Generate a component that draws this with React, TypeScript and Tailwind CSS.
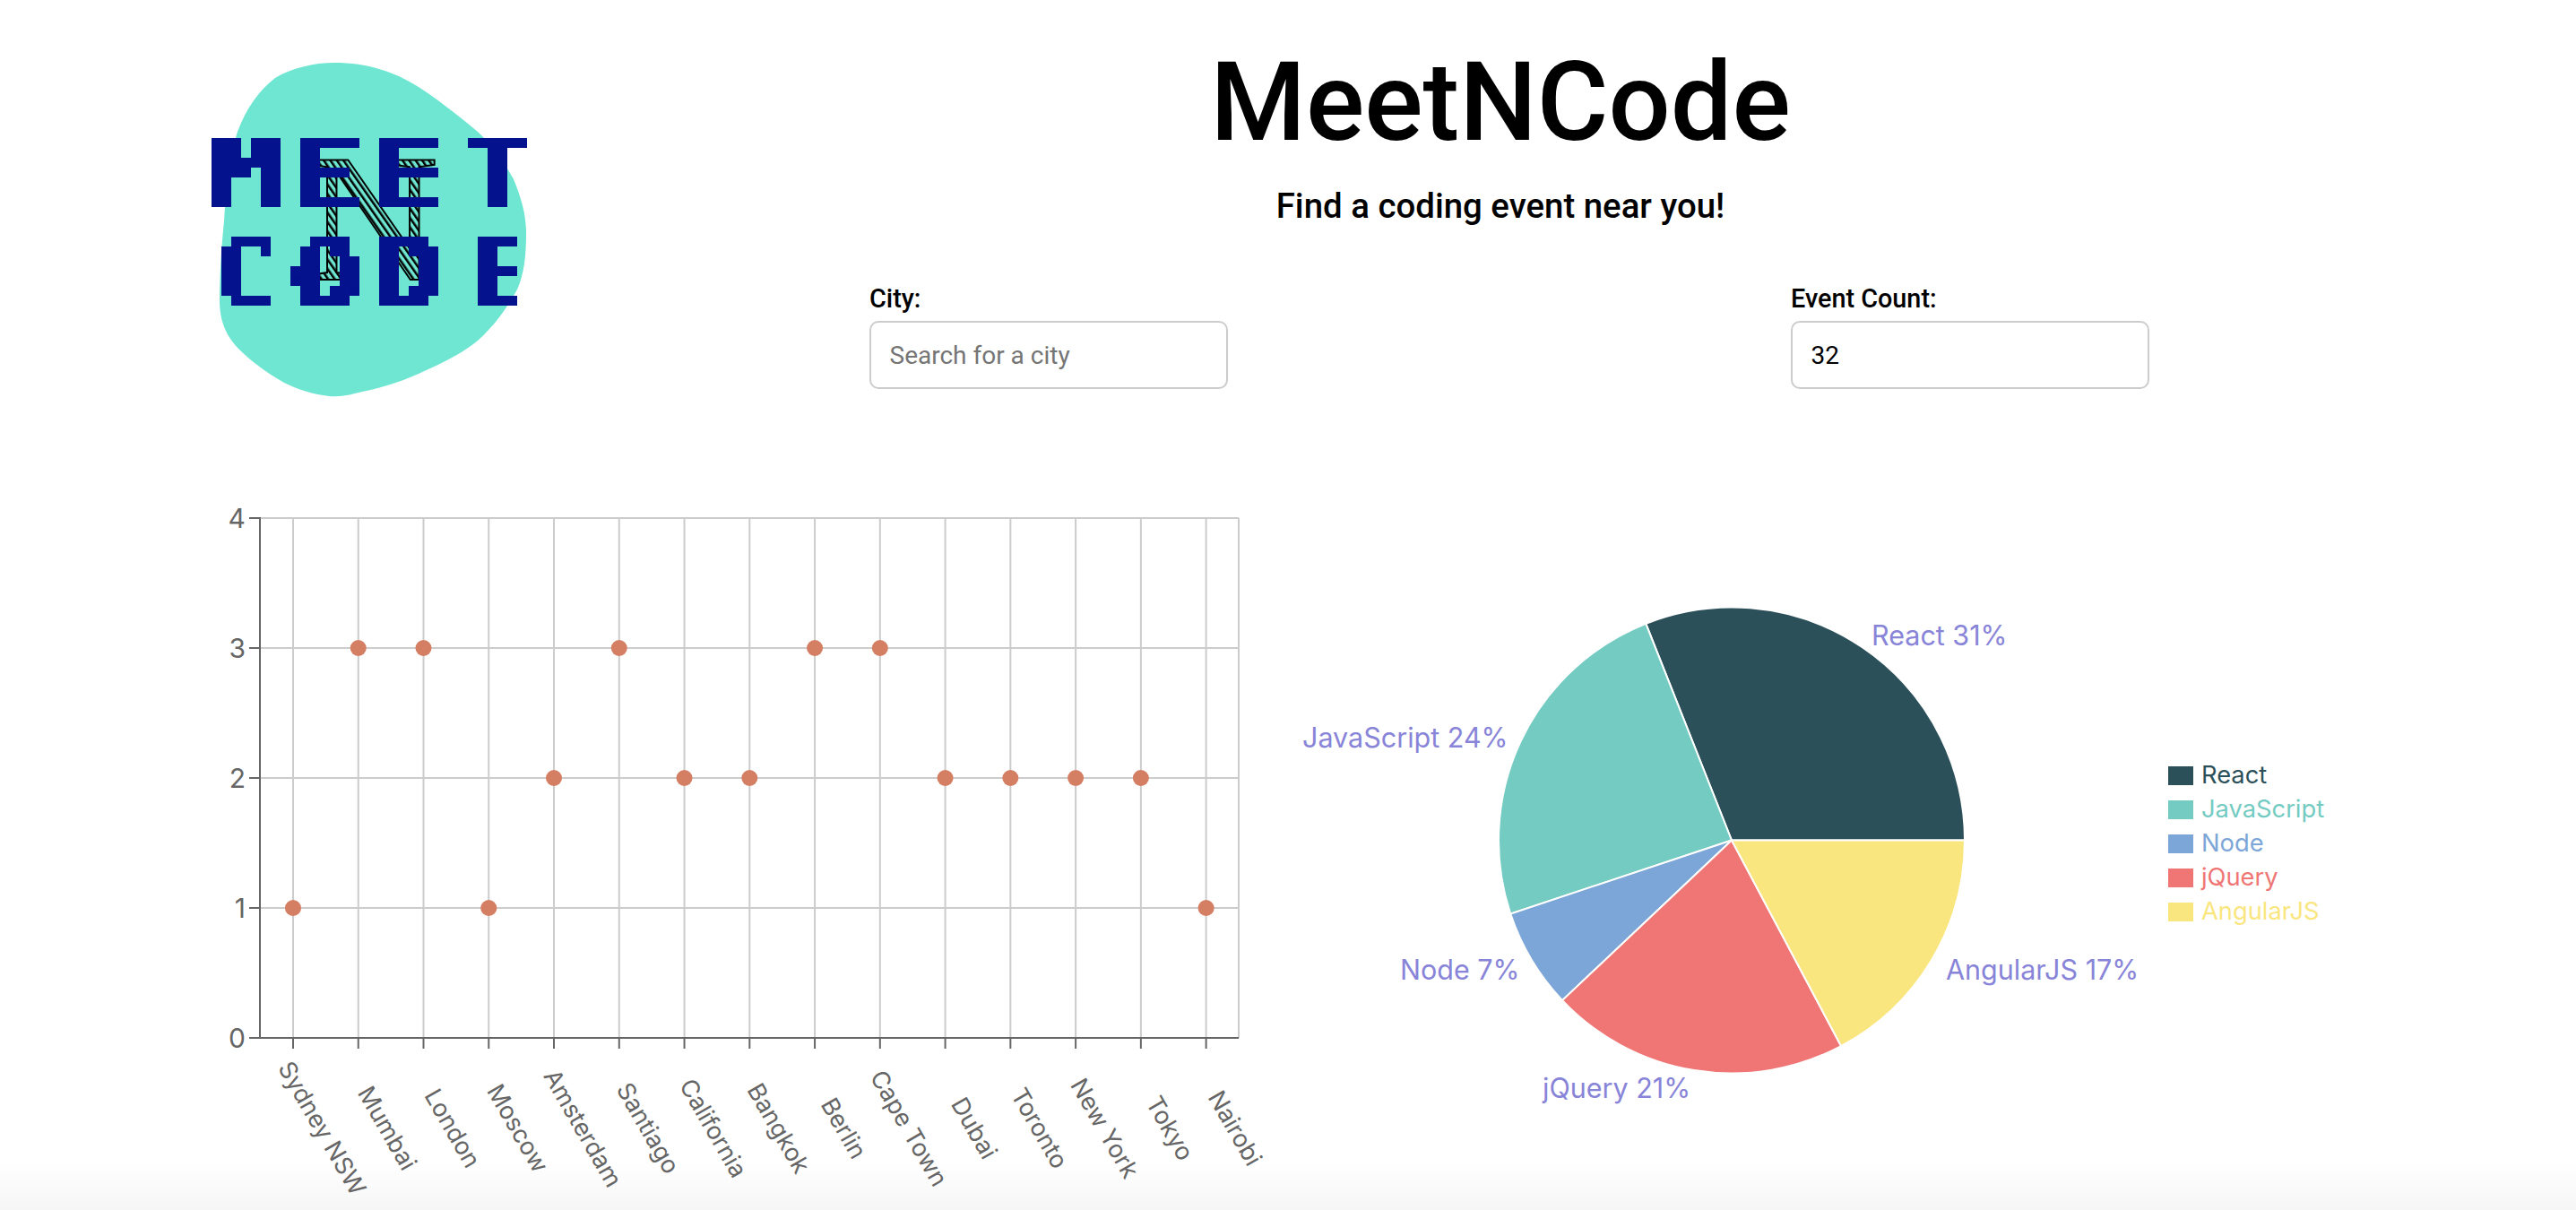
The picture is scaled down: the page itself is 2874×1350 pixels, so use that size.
import React from 'react';

const cities = [
  { name: 'Sydney NSW', count: 1 },
  { name: 'Mumbai', count: 3 },
  { name: 'London', count: 3 },
  { name: 'Moscow', count: 1 },
  { name: 'Amsterdam', count: 2 },
  { name: 'Santiago', count: 3 },
  { name: 'California', count: 2 },
  { name: 'Bangkok', count: 2 },
  { name: 'Berlin', count: 3 },
  { name: 'Cape Town', count: 3 },
  { name: 'Dubai', count: 2 },
  { name: 'Toronto', count: 2 },
  { name: 'New York', count: 2 },
  { name: 'Tokyo', count: 2 },
  { name: 'Nairobi', count: 1 },
];

const genres = [
  { name: 'React', color: '#2c5059', from: 0, to: 111.6, label: 'React 31%', x: 2088, y: 709 },
  { name: 'JavaScript', color: '#74cbc2', from: 111.6, to: 198.4, label: 'JavaScript 24%', x: 1453, y: 823 },
  { name: 'Node', color: '#7da6d8', from: 198.4, to: 223.4, label: 'Node 7%', x: 1562, y: 1082 },
  { name: 'jQuery', color: '#ef7674', from: 223.4, to: 298, label: 'jQuery 21%', x: 1721, y: 1214 },
  { name: 'AngularJS', color: '#fae67f', from: 298, to: 360, label: 'AngularJS 17%', x: 2171, y: 1082 },
];

const logoLetters = [
  { ch: 'M', x: 235, w: 76, y: 231 },
  { ch: 'E', x: 325, w: 78, y: 231 },
  { ch: 'E', x: 417, w: 78, y: 231 },
  { ch: 'T', x: 519, w: 68, y: 231 },
  { ch: 'C', x: 235, w: 76, y: 342 },
  { ch: 'O', x: 325, w: 78, y: 342 },
  { ch: 'D', x: 417, w: 78, y: 342 },
  { ch: 'E', x: 525, w: 62, y: 342 },
];

const Logo = () => (
  <svg viewBox="220 50 380 410" className="w-[380px] h-[410px] shrink-0">
    <defs>
      {/* blocky look for the logo lettering */}
      <filter
        id="pixelate"
        x="225"
        y="143"
        width="372"
        height="211"
        filterUnits="userSpaceOnUse"
        primitiveUnits="userSpaceOnUse"
        colorInterpolationFilters="sRGB"
      >
        <feMorphology in="SourceGraphic" operator="dilate" radius="2 0" result="wide" />
        <feFlood x="230" y="148" width="1" height="1" floodColor="#000" />
        <feComposite width="11" height="11" />
        <feTile result="grid" />
        <feComposite in="wide" in2="grid" operator="in" />
        <feComponentTransfer>
          <feFuncA type="discrete" tableValues="0 1 1 1" />
        </feComponentTransfer>
        <feMorphology operator="dilate" radius="5" />
      </filter>
      <pattern id="hatch" width="6" height="6" patternUnits="userSpaceOnUse" patternTransform="rotate(-35)">
        <rect width="6" height="6" fill="#6ee6d2" />
        <rect width="2.5" height="6" fill="#000" />
      </pattern>
    </defs>
    <path
      d="M373 70 C 410 70 440 80 467 97 C 490 112 515 132 533 147 C 552 165 565 185 573 200 C 582 222 587 240 587 260 C 587 285 585 305 577 323 C 565 345 550 365 533 380 C 515 395 490 407 467 417 C 445 427 420 434 400 438 C 385 442 375 443 367 442 C 350 440 333 435 317 427 C 298 416 280 403 267 390 C 252 375 245 358 245 335 C 245 310 247 275 250 247 C 252 210 256 175 265 147 C 275 120 290 100 307 87 C 325 76 350 70 373 70 Z"
      fill="#6ee6d2"
    />
    <text
      x={342}
      y={312}
      fontFamily="'Liberation Serif', serif"
      fontSize={204}
      fill="url(#hatch)"
      stroke="#000"
      strokeWidth={2}
    >
      N
    </text>
    <g filter="url(#pixelate)">
      {logoLetters.map((l, i) => (
        <text
          key={i}
          x={l.x}
          y={l.y}
          textLength={l.w}
          lengthAdjust="spacingAndGlyphs"
          fontFamily="'DejaVu Sans Mono', monospace"
          fontWeight={700}
          fontSize={107}
          fill="#05128e"
        >
          {l.ch}
        </text>
      ))}
    </g>
  </svg>
);

const Field = ({ label, value, placeholder }: { label: string; value?: string; placeholder?: string }) => (
  <label className="flex flex-col w-[400px]">
    <span className="text-[28.8px] leading-[34px] font-medium text-black">{label}</span>
    <input
      readOnly
      value={value}
      placeholder={placeholder}
      className="mt-[8px] h-[76px] w-full rounded-[10px] border-2 border-[#ccc] bg-white px-[20.5px] text-[28px] text-black placeholder:text-[#757575] outline-none"
    />
  </label>
);

const ScatterChart = () => {
  const xAt = (i: number) => 290.6 + 72.76 * (i + 0.5);
  const yAt = (v: number) => 1158 - 145 * v;
  return (
    <svg viewBox="220 560 1200 790" className="w-[1200px] h-[790px] shrink-0" fontFamily="Inter, sans-serif">
      {[1, 2, 3, 4].map((v) => (
        <line key={v} x1={290} x2={1382} y1={yAt(v)} y2={yAt(v)} stroke="#ccc" strokeWidth={2} />
      ))}
      {cities.map((c, i) => (
        <line key={c.name} x1={xAt(i)} x2={xAt(i)} y1={578} y2={1158} stroke="#ccc" strokeWidth={2} />
      ))}
      <line x1={1382} x2={1382} y1={578} y2={1158} stroke="#ccc" strokeWidth={2} />
      <line x1={290} x2={290} y1={577} y2={1159} stroke="#666" strokeWidth={2} />
      <line x1={289} x2={1382} y1={1158} y2={1158} stroke="#666" strokeWidth={2} />
      {[0, 1, 2, 3, 4].map((v) => (
        <g key={v}>
          <line x1={278} x2={290} y1={yAt(v)} y2={yAt(v)} stroke="#666" strokeWidth={2} />
          <text x={274} y={yAt(v) + 11} textAnchor="end" fontSize={30} fill="#666">
            {v}
          </text>
        </g>
      ))}
      {cities.map((c, i) => (
        <g key={c.name}>
          <line x1={xAt(i)} x2={xAt(i)} y1={1158} y2={1170} stroke="#666" strokeWidth={2} />
          <text
            transform={`translate(${xAt(i) + 32} 1259) rotate(60)`}
            y={9}
            textAnchor="middle"
            fontSize={27}
            fill="#666"
          >
            {c.name}
          </text>
          <circle cx={xAt(i)} cy={yAt(c.count)} r={9} fill="#d47f63" />
        </g>
      ))}
    </svg>
  );
};

const slicePath = (from: number, to: number) => {
  const cx = 1932;
  const cy = 937.5;
  const r = 260;
  const x1 = cx + r * Math.cos((from * Math.PI) / 180);
  const y1 = cy - r * Math.sin((from * Math.PI) / 180);
  const x2 = cx + r * Math.cos((to * Math.PI) / 180);
  const y2 = cy - r * Math.sin((to * Math.PI) / 180);
  return `M${cx} ${cy} L${x1} ${y1} A${r} ${r} 0 ${to - from > 180 ? 1 : 0} 0 ${x2} ${y2} Z`;
};

const PieChart = () => (
  <svg viewBox="1420 560 985 790" className="w-[985px] h-[790px] shrink-0" fontFamily="Inter, sans-serif">
    {genres.map((g) => (
      <path key={g.name} d={slicePath(g.from, g.to)} fill={g.color} stroke="#fff" strokeWidth={2} />
    ))}
    {genres.map((g) => (
      <text key={g.name} x={g.x} y={g.y + 11} fontSize={30.5} fill="#8884d8">
        {g.label}
      </text>
    ))}
  </svg>
);

const Legend = () => (
  <ul className="ml-[14px] mt-[286px] flex flex-col font-['Inter',sans-serif]">
    {genres.map((g) => (
      <li key={g.name} className="flex h-[38px] items-center gap-[9px] text-[27.3px]" style={{ color: g.color }}>
        <span className="h-[21px] w-[28px]" style={{ backgroundColor: g.color }} />
        {g.name}
      </li>
    ))}
  </ul>
);

const App = () => {
  return (
    <div className="w-[2874px] h-[1350px] overflow-hidden bg-gradient-to-t from-[#f6f6f6] to-white to-[4%] font-['Roboto',sans-serif]">
      <header className="flex h-[560px] items-start pl-[220px] pt-[50px]">
        <Logo />
        <div className="flex w-[2148px] flex-col">
          <h1 className="text-center text-[122px] leading-[130px] font-medium text-black">MeetNCode</h1>
          <p className="mt-[27px] text-center text-[38.4px] leading-[46px] font-medium text-black">Find a coding event near you!</p>
          <div className="mt-[63px] flex gap-[628px] pl-[370px]">
            <Field label="City:" placeholder="Search for a city" />
            <Field label="Event Count:" value="32" />
          </div>
        </div>
      </header>
      <main className="flex pl-[220px]">
        <ScatterChart />
        <PieChart />
        <Legend />
      </main>
    </div>
  );
};

export default App;
